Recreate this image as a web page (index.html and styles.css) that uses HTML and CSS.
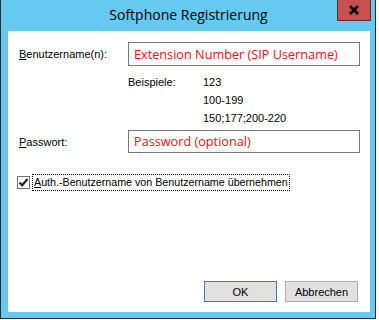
FILE: index.html
```html
<!DOCTYPE html>
<html lang="de">
<head>
  <meta charset="UTF-8">
  <title>Softphone Registrierung</title>
  <link rel="stylesheet" href="styles.css">
</head>
<body>
  <div class="window">
    <div class="titlebar">
      <div class="title">Softphone Registrierung</div>
      <button class="close" type="button" aria-label="Schließen">
        <svg width="12" height="10" viewBox="0 0 12 10">
          <path d="M2 1 L10 9 M10 1 L2 9" stroke="#000" stroke-width="2.6" fill="none"/>
        </svg>
      </button>
    </div>

    <div class="client">
      <div class="form">
        <label class="label" for="user"><u>B</u>enutzername(n):</label>
        <div class="field" id="user">Extension Number (SIP Username)</div>

        <div class="examples">
          <span class="examples-title">Beispiele:</span>
          <div class="examples-list">
            <span>123</span>
            <span>100-199</span>
            <span>150;177;200-220</span>
          </div>
        </div>

        <label class="label" for="pass"><u>P</u>asswort:</label>
        <div class="field field-pass" id="pass">Password (optional)</div>
      </div>

      <div class="check-row">
        <span class="checkbox">
          <svg width="11" height="11" viewBox="0 0 11 11">
            <path d="M1.5 5.5 L4.2 8.3 L9.5 2" stroke="#222" stroke-width="2.2" fill="none"/>
          </svg>
        </span>
        <span class="check-label"><u>A</u>uth.-Benutzername von Benutzername übernehmen</span>
      </div>

      <div class="buttons">
        <button class="btn btn-default" type="button">OK</button>
        <button class="btn" type="button">Abbrechen</button>
      </div>
    </div>
  </div>
</body>
</html>
```

FILE: styles.css
```css
* {
  margin: 0;
  padding: 0;
  box-sizing: border-box;
}

body {
  background-color: #fff;
  font-family: 'Liberation Sans', Arial, sans-serif;
  font-size: 11px;
  color: #000;
}

.window {
  width: 376px;
  height: 319px;
  background-color: #65c9f0;
  border-left: 1px solid #2b2b2b;
  border-right: 1px solid #2b2b2b;
  border-bottom: 1px solid #2b2b2b;
  padding: 0 5px 6px 7px;
  display: flex;
  flex-direction: column;
}

.titlebar {
  height: 31px;
  display: grid;
}

.title {
  grid-area: 1 / 1;
  text-align: center;
  font-family: 'Open Sans', sans-serif;
  font-size: 14px;
  line-height: 30px;
  color: #000;
  margin-left: -7px;
  margin-right: -6px;
}

.close {
  grid-area: 1 / 1;
  justify-self: end;
  align-self: start;
  width: 34px;
  height: 21px;
  margin-right: -1px;
  background-color: #c75050;
  border: 1px solid #5a2a2a;
  border-top: none;
  display: flex;
  align-items: center;
  justify-content: center;
}

.client {
  flex: 1;
  background-color: #fff;
  padding: 11px 0 0 11px;
  display: flex;
  flex-direction: column;
}

.form {
  display: grid;
  grid-template-columns: 109px 232px;
  align-items: center;
}

.label {
  line-height: 20px;
}

.field {
  height: 24px;
  border: 1px solid #7a7a7a;
  padding-left: 5px;
  font-family: 'Open Sans', sans-serif;
  font-size: 12.7px;
  line-height: 22px;
  color: #f51010;
  white-space: nowrap;
}

.field-pass {
  height: 23px;
  line-height: 21px;
}

.examples {
  grid-column: 2;
  display: flex;
  padding: 7px 0 3px;
  line-height: 18px;
}

.examples-title {
  width: 75px;
}

.examples-list {
  display: flex;
  flex-direction: column;
}

.check-row {
  display: flex;
  align-items: center;
  margin-top: 21px;
  margin-left: -2px;
}

.checkbox {
  width: 13px;
  height: 13px;
  border: 1px solid #707070;
  display: flex;
  align-items: center;
  justify-content: center;
}

.check-label {
  margin-left: 2px;
  padding: 1px 1px 2px;
  border: 1px dotted #000;
  font-size: 10.7px;
}

.buttons {
  margin-top: auto;
  margin-bottom: 10px;
  display: flex;
  justify-content: flex-end;
  gap: 8px;
  padding-right: 12px;
}

.btn {
  width: 73px;
  height: 21px;
  background-color: #e1e1e1;
  border: 1px solid #adadad;
  font-family: 'Liberation Sans', Arial, sans-serif;
  font-size: 11px;
  color: #000;
}

.btn-default {
  border-color: #3c7fb1;
}
```
